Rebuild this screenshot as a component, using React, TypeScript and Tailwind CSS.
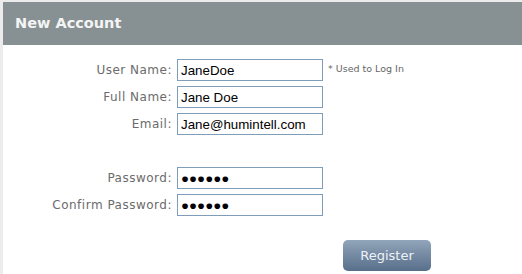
import { useState } from "react";

const labelCls =
  "text-right text-[12px] tracking-[0.5px] text-[#6b6b6b] font-['DejaVu_Sans',sans-serif] leading-[22px]";
const inputCls =
  "w-[146px] h-[22px] border border-[#7f9db9] bg-white px-[3px] text-[13.33px] text-black font-['Liberation_Sans',Arial,sans-serif] outline-none";

const App = () => {
  const [formData, setFormData] = useState({
    userName: "JaneDoe",
    fullName: "Jane Doe",
    email: "Jane@humintell.com",
    password: "●●●●●●",
    confirm: "●●●●●●",
  });

  const handleChange = (e: any) => {
    const { value, name } = e.target;
    setFormData((p) => ({ ...p, [name]: value }));
  };

  return (
    <div className="w-[522px] h-[274px] bg-[#ececec] pt-[2px] pl-[3px]">
      <div className="h-full bg-white">
        <div className="h-[43px] bg-[#879193] flex items-center pl-[12px]">
          <h1 className="text-[14.5px] font-bold text-[#f4f4f4] font-['DejaVu_Sans',sans-serif]">
            New Account
          </h1>
        </div>

        <form
          onSubmit={(e) => e.preventDefault()}
          className="pt-[14px]"
        >
          <div className="grid grid-cols-[169px_146px_auto] gap-x-[5px] gap-y-[5px] items-center">
            <label className={labelCls}>User Name:</label>
            <input
              name="userName"
              value={formData.userName}
              onChange={handleChange}
              className={inputCls}
              type="text"
            />
            <span className="self-start pt-[3px] text-[9.5px] text-[#666] font-['DejaVu_Sans',sans-serif]">
              * Used to Log In
            </span>

            <label className={labelCls}>Full Name:</label>
            <input
              name="fullName"
              value={formData.fullName}
              onChange={handleChange}
              className={inputCls}
              type="text"
            />
            <span />

            <label className={labelCls}>Email:</label>
            <input
              name="email"
              value={formData.email}
              onChange={handleChange}
              className={inputCls}
              type="text"
            />
            <span />

            <div className="col-span-3 h-[22px]" />

            <label className={labelCls}>Password:</label>
            <input
              name="password"
              value={formData.password}
              onChange={handleChange}
              className={inputCls}
              type="text"
            />
            <span />

            <label className={labelCls}>Confirm Password:</label>
            <input
              name="confirm"
              value={formData.confirm}
              onChange={handleChange}
              className={inputCls}
              type="text"
            />
            <span />
          </div>

          <button
            type="submit"
            className="ml-[340px] mt-[24px] w-[88px] h-[31px] rounded-[5px] bg-gradient-to-b from-[#92a5ba] to-[#586f8b] text-[13px] text-[#eef2f6] font-['DejaVu_Sans',sans-serif]"
          >
            Register
          </button>
        </form>
      </div>
    </div>
  );
};

export default App;
